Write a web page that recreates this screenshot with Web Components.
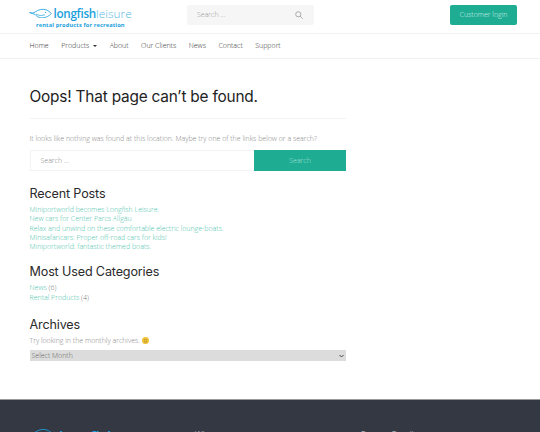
<!doctype html>
<html><head><meta charset="utf-8"><style>
html,body{margin:0;padding:0;background:#fff}
body{font:300 7px/1.3 "Open Sans",sans-serif;color:#555;height:432px;overflow:hidden}
</style></head><body>
<lf-header></lf-header>
<lf-nav></lf-nav>
<lf-main></lf-main>
<lf-footer></lf-footer>
<script>
const fish=(c,w)=>`<svg width="${w}" viewBox="0 0 36 17" height="${w*17/36}" fill="none" stroke="${c}" style="display:block;flex:none"><path d="M1 7C5 8.500 7 8 10 6 14 2.500 22 1 27 3c3.500 1.300 6 3.500 8 5.500-3 3.500-8 7-15 7-5 0-8-2.500-10.500-5.500C7 9 4 8.500 1 7Z" stroke-width="1.300"/><path d="M11 9.500c4 2.500 9 3 14 1" stroke-width="1.100"/><circle cx="26" cy="6.800" r="1" fill="${c}" stroke="none"/></svg>`;
const def=(n,html)=>customElements.define(n,class extends HTMLElement{constructor(){super();this.attachShadow({mode:'open'}).innerHTML=html}});
def('lf-logo',`<style>:host{display:block;font-family:"Open Sans",sans-serif;color:#1a9fdc}
.t{display:flex;align-items:center;gap:1.500px;height:16px}.w{font-size:11.700px;font-weight:600;letter-spacing:-.3px;line-height:16px;white-space:nowrap}.l{font-weight:300;color:#55b8e6;letter-spacing:.1px}
.s{font-size:5.700px;font-weight:700;line-height:7px;margin:1px 0 0 7px;white-space:nowrap;letter-spacing:.12px}</style>
<div class="t">${fish('#1a9fdc',23)}<span class="w">longfish<span class="l">leisure</span></span></div><div class="s">rental products for recreation</div>`);
def('lf-header',`<style>:host{display:flex;box-sizing:border-box;height:34px;align-items:center;padding:0 23px 4px 29px;border-bottom:1px solid #f1f1f1}
lf-logo{width:158px;margin-top:5px}
.q{width:127px;height:20px;background:#f6f6f6;border-radius:2px;display:flex;align-items:center;justify-content:space-between;box-sizing:border-box;padding:0 11px 0 10px;color:#999}
.b{margin-left:auto;width:67px;height:20px;background:#1eac93;border-radius:2px;color:#d5f0ea;display:flex;align-items:center;justify-content:center}</style>
<lf-logo></lf-logo><div class="q"><span>Search ...</span><svg width="8" height="8" viewBox="0 0 8 8" fill="none" stroke="#aaa" stroke-width="1"><circle cx="3.300" cy="3.300" r="2.600"/><path d="M5.200 5.200 7.600 7.600"/></svg></div><div class="b">Customer login</div>`);
def('lf-nav',`<style>:host{display:flex;box-sizing:border-box;height:25px;padding:0 0 0 29.500px;gap:12.500px;align-items:center;border-bottom:1px solid #f1f1f1;color:#333}
i{display:inline-block;border:2.200px solid transparent;border-top:2.500px solid #333;border-bottom:0;margin:0 0 1px 2px;vertical-align:middle}</style>
<span>Home</span><span>Products <i></i></span><span>About</span><span>Our Clients</span><span>News</span><span>Contact</span><span>Support</span>`);
def('lf-h',`<style>:host{display:block;font:400 12.600px/16px "Inter","Liberation Sans",sans-serif;color:#2a2a2a;letter-spacing:-.15px}</style><slot></slot>`);
def('lf-links',`<style>:host{display:block;margin-top:3px;line-height:9.300px;color:#4fc4ae}::slotted(*){display:block}</style><slot></slot>`);
def('lf-main',`<style>:host{display:block;box-sizing:border-box;width:346px;padding:27px 0 0 29.500px}
h1{font:400 15.400px/21px "Inter","Liberation Sans",sans-serif;color:#222;margin:0;letter-spacing:-.2px}
hr{border:0;border-top:1px solid #f3f3f3;margin:11px 0 14px}
p{margin:0;color:#888;line-height:11px;white-space:nowrap}
form{display:flex;height:21px;margin:6px 0 15px}
.in{flex:1;border:1px solid #f3f3f3;border-right:0;color:#888;display:flex;align-items:center;padding-left:10px}
.go{width:92px;background:#1eac93;color:#a5e0d4;display:flex;align-items:center;justify-content:center}
section{margin-bottom:13px}
section.c{margin-bottom:15px}
span.n{color:#777}
.sel{height:11px;background:#dcdcdc;display:flex;justify-content:space-between;align-items:center;color:#666;padding:0 2px;margin-top:4px;line-height:11px}
</style>
<h1>Oops! That page can’t be found.</h1><hr>
<p>It looks like nothing was found at this location. Maybe try one of the links below or a search?</p>
<form><div class="in">Search ...</div><div class="go">Search</div></form>
<section><lf-h>Recent Posts</lf-h><lf-links><span>Miniportworld becomes Longfish Leisure.</span><span>New cars for Center Parcs Allgäu</span><span>Relax and unwind on these comfortable electric lounge-boats.</span><span>Minisafaricars: Proper off-road cars for kids!</span><span>Miniportworld: fantastic themed boats.</span></lf-links></section>
<section class="c"><lf-h>Most Used Categories</lf-h><lf-links><span>News <span class="n">(6)</span></span><span>Rental Products <span class="n">(4)</span></span></lf-links></section>
<section><lf-h>Archives</lf-h><p style="margin-top:2px">Try looking in the monthly archives. <svg width="7" height="7" viewBox="0 0 7 7" style="vertical-align:-1px"><circle cx="3.500" cy="3.500" r="3.500" fill="#f1c232"/><circle cx="2.400" cy="2.700" r=".5" fill="#765"/><circle cx="4.600" cy="2.700" r=".5" fill="#765"/><path d="M2 4.500c1 .8 2 .8 3 0" stroke="#765" stroke-width=".5" fill="none"/></svg></p>
<div class="sel"><span>Select Month</span><svg width="5" height="4" viewBox="0 0 5 4" fill="none" stroke="#444" stroke-width="1"><path d="M.5 1 2.500 3 4.500 1"/></svg></div></section>`);
def('lf-footer',`<style>:host{position:absolute;left:0;right:0;top:399px;height:33px;background:#333843;border-top:1px solid #999;box-sizing:border-box;overflow:hidden;color:#ddd;font-size:8.500px;line-height:12px}
.r{display:flex;padding:29px 0 0 29px;align-items:flex-start}.a{width:166px;display:flex;gap:6px;color:#1a9fdc;font-size:15px;font-weight:600;line-height:17px;margin-top:-1px}.b{width:165px}</style>
<div class="r"><div class="a">${fish('#1a9fdc',24)}<span>longfish</span></div><div class="b">Who we are</div><div>Contact Details</div></div>`);
</script></body></html>
